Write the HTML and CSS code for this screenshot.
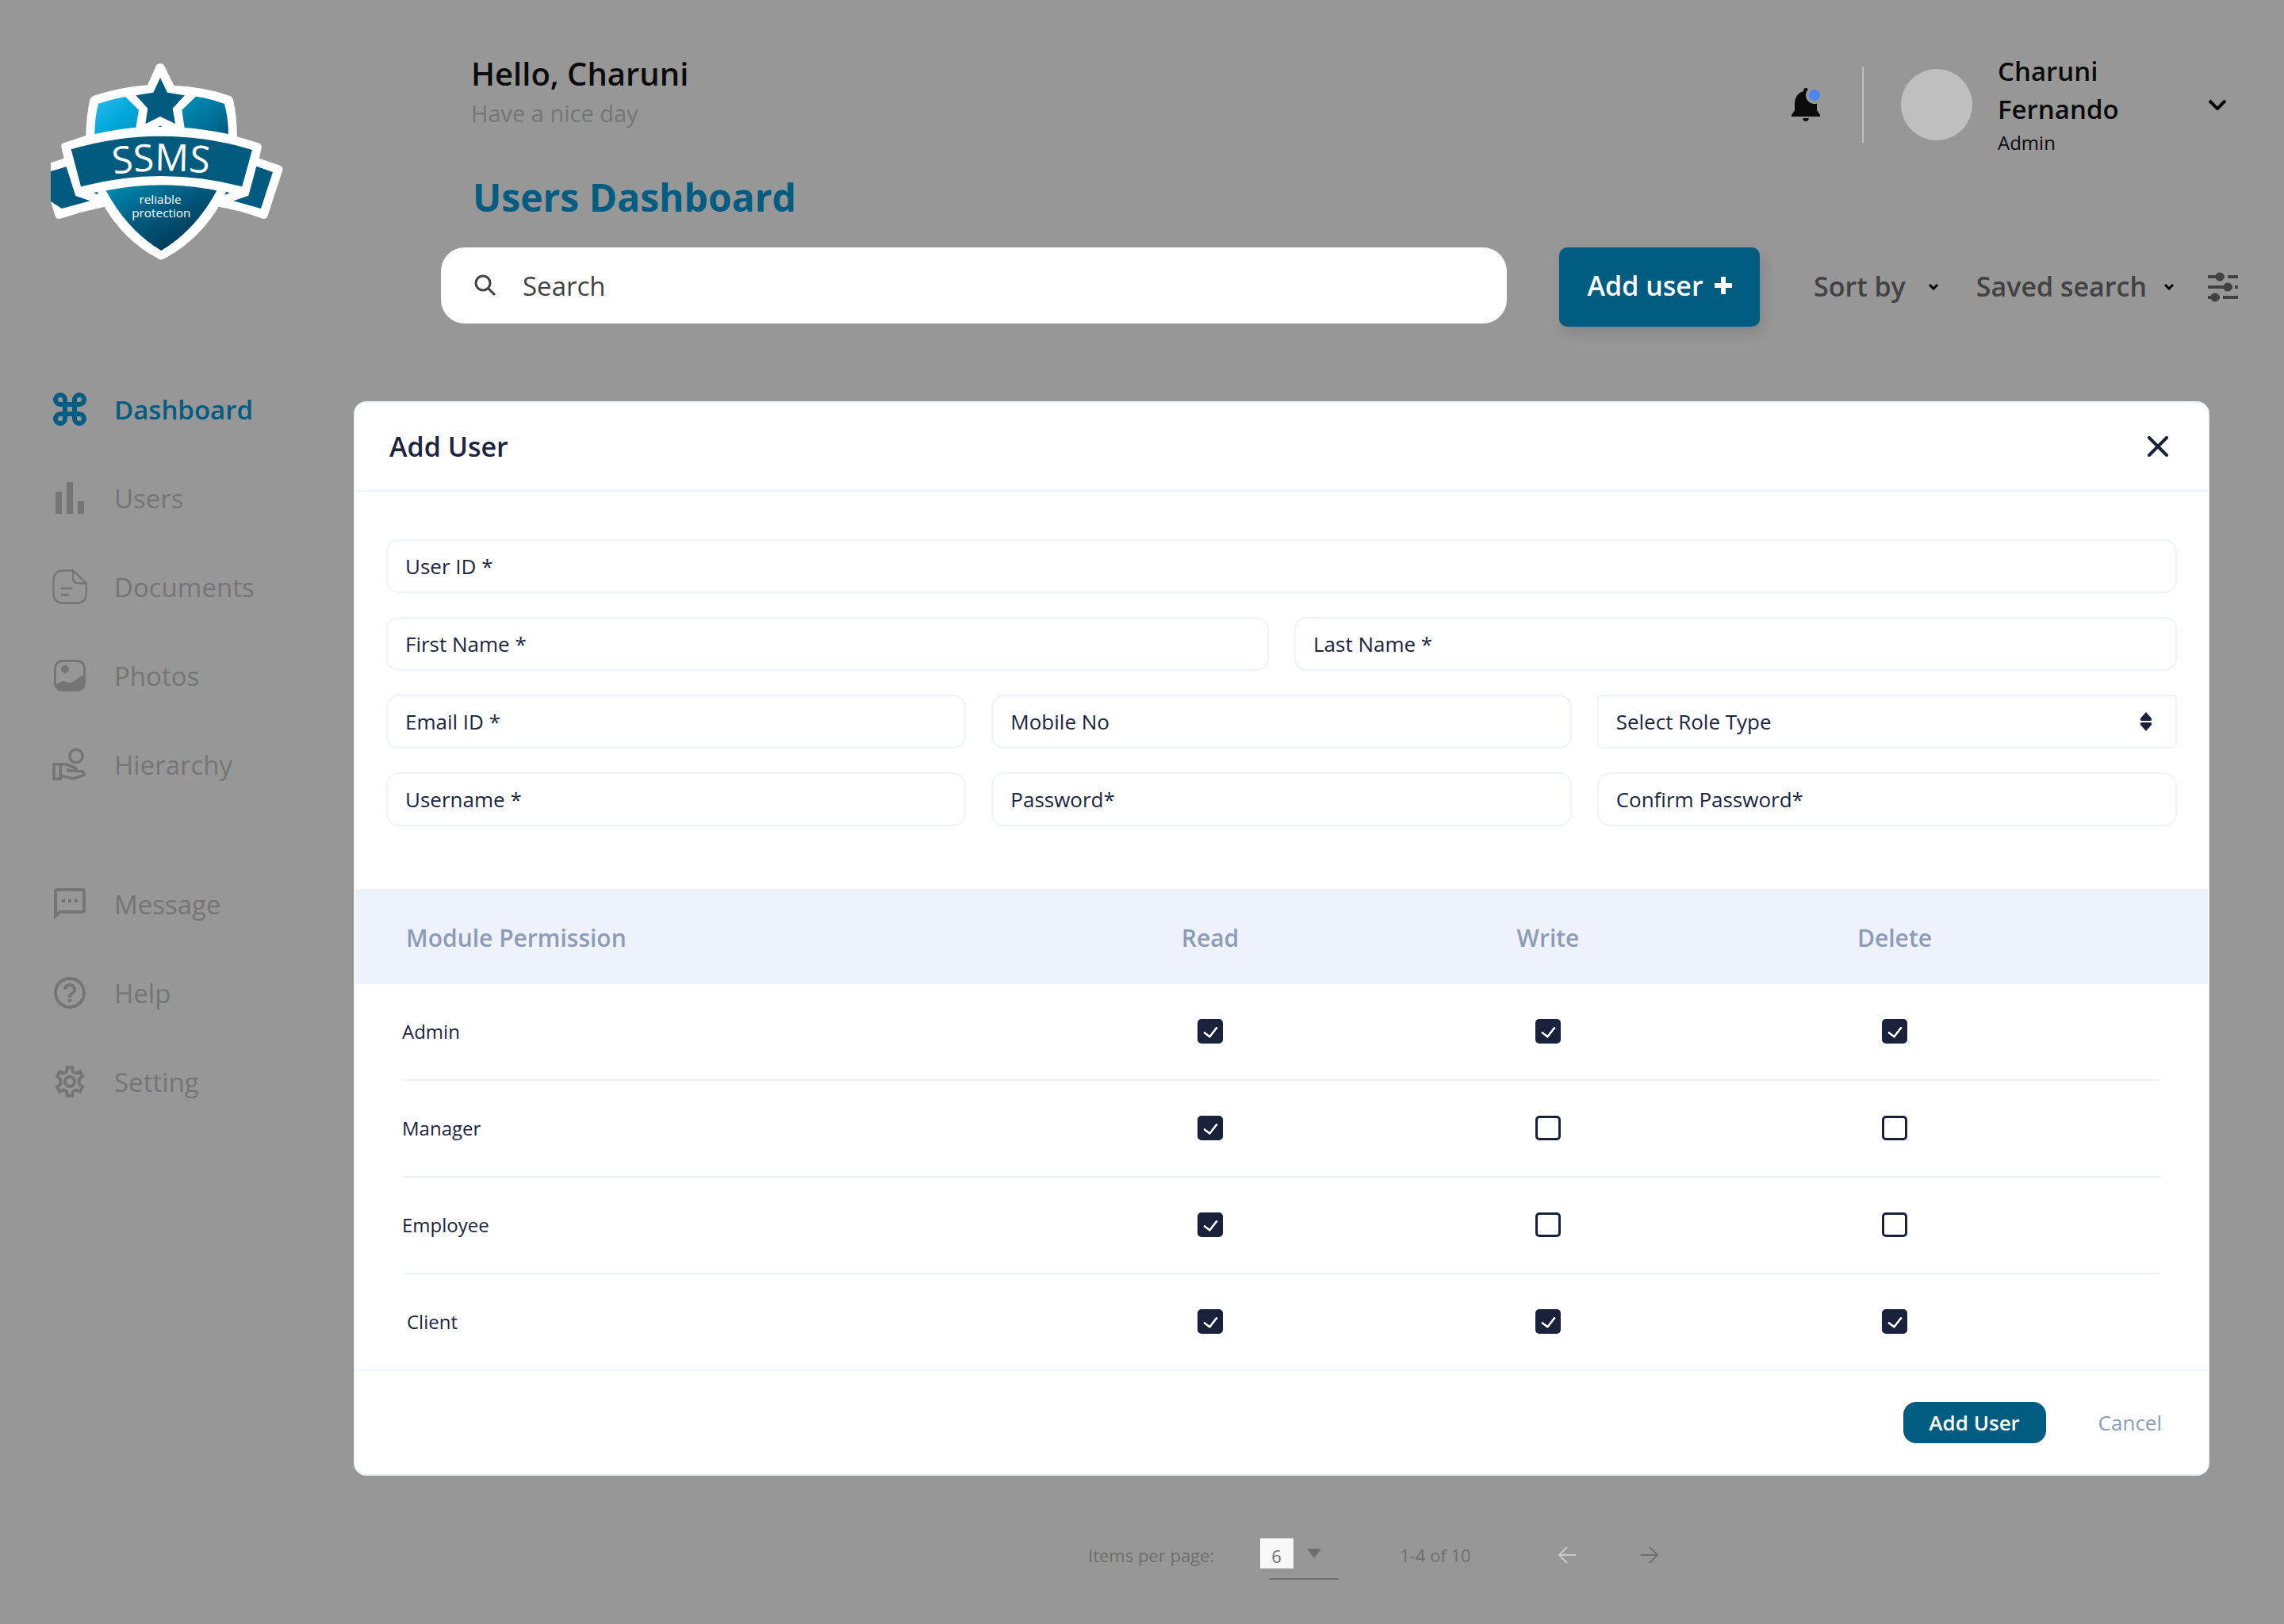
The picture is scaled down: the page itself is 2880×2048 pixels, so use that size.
FILE: index.html
```
<!DOCTYPE html>
<html lang="en">
<head>
<meta charset="utf-8">
<title>Users Dashboard</title>
<link rel="stylesheet" href="styles.css">
</head>
<body>
<div class="page">
  <aside class="sidebar">
    <svg class="logo" viewBox="0 0 1020 870" role="img" aria-label="SSMS reliable protection">
      <defs>
        <linearGradient id="left" x1="0" y1="0" x2="1" y2="1"><stop offset="0" stop-color="#2ebcf3"/><stop offset=".55" stop-color="#00a8d8"/><stop offset="1" stop-color="#0096c4"/></linearGradient>
        <linearGradient id="right" x1="0" y1="0" x2="1" y2="1"><stop offset="0" stop-color="#0092bd"/><stop offset="1" stop-color="#005b7f"/></linearGradient>
        <linearGradient id="base" x1="0.1" y1="0" x2="0.8" y2="0.8"><stop offset="0" stop-color="#0088b0"/><stop offset=".5" stop-color="#005b7f"/><stop offset="1" stop-color="#003a58"/></linearGradient>
        <path id="arc" d="M230 494Q490 440 750 490"/>
      </defs>
      <path fill="#fff" d="M472 66Q486 54 500 66L538 143Q650 148 750 183Q760 187 763 200Q776 260 777 337L858 361Q872 366 869 380L860 419L940 446Q952 452 949 464L892 638Q887 650 873 647Q790 616 707 602Q630 730 501 799Q490 806 479 799Q350 730 275 602Q190 620 108 647Q95 650 89 638L72 582V436L122 419L112 375Q110 365 121 361L205 333Q206 260 220 198Q223 187 233 183Q330 150 438 142Z"/>
      <path fill="url(#left)" d="M252 212Q300 196 354 186L405 236L394 302Q310 310 238 327Q238 268 252 212Z"/>
      <path fill="url(#right)" d="M621 185Q676 193 729 213Q744 270 744 327Q660 309 578 303L568 236Z"/>
      <path fill="#005b7f" d="M486 114L513 170L579 181L533 230L543 288L486 261L430 289L439 230L394 181L460 170ZM479 300Q486 293 493 300ZM149 385Q490 284 834 387L796 526Q490 446 186 526ZM72 468L131 451L166 561L221 580L114 609L72 582ZM850 449L912 471L867 609L763 580L820 560ZM234 550L249 546L251 556ZM735 546L750 549L730 558Z"/>
      <path fill="url(#base)" d="M281 541Q490 498 700 541Q620 690 490 768Q362 692 281 541Z"/>
      <g fill="#fff" text-anchor="middle">
        <text class="logo-name"><textPath href="#arc" startOffset="50%">SSMS</textPath></text>
        <text class="logo-tag" x="486" y="590">reliable</text>
        <text class="logo-tag" x="490" y="642">protection</text>
      </g>
    </svg>
    <nav class="menu">
      <a class="menu-item active" href="#"><svg viewBox="0 0 48 48" fill="none" stroke="currentColor" stroke-width="6"><path d="M18 18V12A6 6 0 1 0 12 18H36A6 6 0 1 0 30 12V36A6 6 0 1 0 36 30H12A6 6 0 1 0 18 36Z"/></svg>Dashboard</a>
      <a class="menu-item" href="#"><svg viewBox="0 0 24 24" fill="currentColor"><path d="M3 8h4v14H3zM10 2h4v20h-4zM17 14h4v8h-4z"/></svg>Users</a>
      <a class="menu-item" href="#"><svg viewBox="0 0 48 48" fill="none" stroke="currentColor" stroke-width="2.4"><path d="M28 3.500H16Q3.500 3.500 3.500 16V32Q3.500 44.500 16 44.500H32Q44.800 44.500 44.800 32V19.500L28 3.500V12Q28 19.500 35 19.500H44.500M14 26H26.500M14 34H22" stroke-linecap="round"/></svg>Documents</a>
      <a class="menu-item" href="#"><svg viewBox="0 0 48 48"><rect x="5.500" y="5.500" width="37" height="37" rx="9" fill="none" stroke="currentColor" stroke-width="3"/><circle cx="18" cy="16" r="5" fill="currentColor"/><path fill="currentColor" d="M6 36Q12 31 17 31Q22 33 25 33Q29 32 36 26Q40 22 43 26V35Q42 43 34 43H14Q7 43 6 36Z"/></svg>Photos</a>
      <a class="menu-item" href="#"><svg viewBox="0 0 48 48" fill="none" stroke="currentColor" stroke-width="3.600"><circle cx="32" cy="13.500" r="8.200"/><path d="M4 23.800H12.200V42.200H4ZM12.200 23.800H19L29 27.500Q32.500 29 32.500 32H24L20 30.500M32 32.500H38.500Q42 33 42 37.500L28 42L12.200 38"/></svg>Hierarchy</a>
    </nav>
    <nav class="menu">
      <a class="menu-item" href="#"><svg viewBox="0 0 24 24" fill="currentColor"><path d="M20 2H4c-1.100 0-2 .9-2 2v18l4-4h14c1.100 0 2-.9 2-2V4c0-1.100-.9-2-2-2zm0 14H5.200L4 17.200V4h16v12zM7 9h2v2H7zm4 0h2v2h-2zm4 0h2v2h-2z"/></svg>Message</a>
      <a class="menu-item" href="#"><svg viewBox="0 0 24 24" fill="currentColor"><path d="M11 18h2v-2h-2v2zm1-16C6.480 2 2 6.480 2 12s4.480 10 10 10 10-4.480 10-10S17.520 2 12 2zm0 18c-4.410 0-8-3.590-8-8s3.590-8 8-8 8 3.590 8 8-3.590 8-8 8zm0-14c-2.210 0-4 1.790-4 4h2c0-1.100.9-2 2-2s2 .9 2 2c0 2-3 1.750-3 5h2c0-2.250 3-2.500 3-5 0-2.210-1.790-4-4-4z"/></svg>Help</a>
      <a class="menu-item" href="#"><svg viewBox="0 0 24 24" fill="none" stroke="currentColor" stroke-width="2"><path d="M10.400 3h3.200l.4 2.700 1.900 1.100 2.500-1 1.600 2.800-2.100 1.700v3.400l2.100 1.700-1.600 2.800-2.500-1-1.900 1.100-.4 2.700h-3.200l-.4-2.700-1.900-1.100-2.500 1L4 15.400l2.100-1.700v-3.400L4 8.600l1.600-2.800 2.500 1L10 5.700z"/><circle cx="12" cy="12" r="3"/></svg>Setting</a>
    </nav>
  </aside>

  <main class="main">
    <header class="topbar">
      <div class="greeting">
        <p class="hello">Hello, Charuni</p>
        <p class="wish">Have a nice day</p>
      </div>
      <div class="account">
        <button class="icon-button" type="button" aria-label="Notifications"><svg class="bell" viewBox="0 0 36 42"><path d="M15 4Q15 0 18 0Q21 0 21 3Q31 7 32 18V28L36 34V36H0V34L4 28V18Q5 7 15 4ZM14 38H22Q21 42 18 42Q15 42 14 38Z"/><circle class="bell-gap" cx="29" cy="9" r="11"/><circle class="bell-dot" cx="29" cy="9" r="7"/></svg></button>
        <span class="divider"></span>
        <span class="avatar"></span>
        <p class="person"><span class="person-name">Charuni Fernando</span><span class="person-role">Admin</span></p>
        <button class="icon-button" type="button" aria-label="Account menu"><svg class="chevron" viewBox="0 0 24 14"><path d="M2 2L12 12L22 2"/></svg></button>
      </div>
    </header>
    <h1 class="title">Users Dashboard</h1>
    <div class="toolbar">
      <label class="search">
        <svg class="search-icon" viewBox="0 0 26 26"><circle cx="10" cy="10" r="9"/><path d="M17 17L25 25"/></svg>
        <input type="search" placeholder="Search" aria-label="Search">
      </label>
      <button class="add-button" type="button">Add user<svg class="plus" viewBox="0 0 22 22"><path d="M11 0V22M0 11H22"/></svg></button>
      <div class="filters">
        <button class="filter sort" type="button">Sort by<svg class="chevron-small" viewBox="0 0 14 9"><path d="M2 2L7 7L12 2"/></svg></button>
        <button class="filter saved" type="button">Saved search<svg class="chevron-small" viewBox="0 0 14 9"><path d="M2 2L7 7L12 2"/></svg></button>
        <button class="icon-button" type="button" aria-label="Filter settings"><svg class="sliders" viewBox="0 0 38 38"><path d="M0 6H11M25 6H38M0 19H20M34 19H38M0 32H5M19 32H38"/><circle cx="15" cy="6" r="5.600"/><circle cx="25" cy="19" r="5.600"/><circle cx="9" cy="32" r="5.600"/><path d="M9 6H21M19 19H31M3 32H15"/></svg></button>
      </div>
    </div>
    <footer class="pagination">
      <label for="per-page">Items per page:</label>
      <span class="per-page"><select id="per-page"><option>6</option></select><svg viewBox="0 0 18 12"><path d="M0 0H18L9 12Z"/></svg></span>
      <span class="range">1-4 of 10</span>
      <button class="icon-button prev" type="button" aria-label="Previous page"><svg class="arrow" viewBox="0 0 22 22"><path d="M22 11H1M11 1L1 11L11 21"/></svg></button>
      <button class="icon-button next" type="button" aria-label="Next page"><svg class="arrow" viewBox="0 0 22 22"><path d="M0 11H21M11 1L21 11L11 21"/></svg></button>
    </footer>
  </main>
</div>

<div class="overlay">
  <form class="modal" role="dialog" aria-labelledby="modal-title">
    <header class="modal-header">
      <h2 id="modal-title">Add User</h2>
      <button class="icon-button" type="button" aria-label="Close"><svg class="close" viewBox="0 0 26 26"><path d="M2 2L24 24M24 2L2 24"/></svg></button>
    </header>
    <div class="fields">
      <input class="field full" type="text" placeholder="User ID *" aria-label="User ID">
      <input class="field half" type="text" placeholder="First Name *" aria-label="First Name">
      <input class="field half" type="text" placeholder="Last Name *" aria-label="Last Name">
      <input class="field" type="email" placeholder="Email ID *" aria-label="Email ID">
      <input class="field" type="tel" placeholder="Mobile No" aria-label="Mobile No">
      <div class="select-wrap"><select class="field role" aria-label="Role Type"><option>Select Role Type</option></select><svg class="sort-icon" viewBox="0 0 16 24"><path d="M8 0L15 8Q16 11 13 11H3Q0 11 1 8ZM8 24L15 16Q16 13 13 13H3Q0 13 1 16Z"/></svg></div>
      <input class="field" type="text" placeholder="Username *" aria-label="Username">
      <input class="field" type="password" placeholder="Password*" aria-label="Password">
      <input class="field" type="password" placeholder="Confirm Password*" aria-label="Confirm Password">
    </div>
    <table class="permissions">
      <thead>
        <tr><th class="module" scope="col">Module Permission</th><th class="level" scope="col">Read</th><th class="level" scope="col">Write</th><th class="level last" scope="col">Delete</th></tr>
      </thead>
      <tbody>
        <tr><th scope="row">Admin</th><td><input type="checkbox" aria-label="Admin read" checked></td><td><input type="checkbox" aria-label="Admin write" checked></td><td class="last"><input type="checkbox" aria-label="Admin delete" checked></td></tr>
        <tr><th scope="row">Manager</th><td><input type="checkbox" aria-label="Manager read" checked></td><td><input type="checkbox" aria-label="Manager write"></td><td class="last"><input type="checkbox" aria-label="Manager delete"></td></tr>
        <tr><th scope="row">Employee</th><td><input type="checkbox" aria-label="Employee read" checked></td><td><input type="checkbox" aria-label="Employee write"></td><td class="last"><input type="checkbox" aria-label="Employee delete"></td></tr>
        <tr><th class="indent" scope="row">Client</th><td><input type="checkbox" aria-label="Client read" checked></td><td><input type="checkbox" aria-label="Client write" checked></td><td class="last"><input type="checkbox" aria-label="Client delete" checked></td></tr>
      </tbody>
    </table>
    <footer class="modal-footer">
      <button class="submit" type="submit">Add User</button>
      <button class="cancel" type="button">Cancel</button>
    </footer>
  </form>
</div>
</body>
</html>
```
FILE: styles.css
```
* { box-sizing: border-box; }

body {
  margin: 0;
  background: #979797;
  color: #0b0b0b;
  font-family: "Open Sans", "Noto Sans", sans-serif;
  font-size: 33px;
}

p, h1, h2 { margin: 0; }
button, input, select { font: inherit; color: inherit; }
button { padding: 0; border: 0; background: none; cursor: pointer; }
svg { display: block; flex: none; }

.page { display: flex; min-height: 100vh; }

/* Sidebar */
.sidebar { flex: none; width: 556px; padding: 60px 0 0 64px; }
.logo { width: 340px; height: 290px; margin-left: -24px; }
.logo-name { font-family: "Open Sans", sans-serif; font-size: 142px; }
.logo-tag { font-family: "Open Sans", sans-serif; font-size: 46px; }
.menu { display: flex; flex-direction: column; gap: 64px; padding-top: 142px; }
.menu + .menu { padding-top: 128px; }
.menu-item { display: flex; align-items: center; gap: 32px; height: 48px; color: #757575; text-decoration: none; }
.menu-item svg { width: 48px; height: 48px; }
.menu-item.active { color: #005c80; font-weight: 600; }

/* Top area */
.main { display: flex; flex: 1; flex-direction: column; padding: 66px 58px 66px 0; }
.topbar { display: flex; justify-content: space-between; padding-left: 38px; }
.hello { font-size: 40px; font-weight: 600; line-height: 54px; }
.wish { font-size: 29px; line-height: 46px; color: #757575; }
.account { display: flex; align-items: center; padding-right: 14px; }
.bell { width: 36px; height: 42px; fill: #0b0b0b; overflow: visible; }
.bell-gap { fill: #979797; }
.bell-dot { fill: #4a86f7; }
.divider { width: 2px; height: 96px; margin: 0 47px 0 53px; background: #c0c0c0; }
.avatar { width: 90px; height: 90px; border-radius: 50%; background: #bfbfbf; }
.person { width: 190px; margin: 0 75px 0 32px; }
.person-name { display: block; font-weight: 600; line-height: 48px; }
.person-role { display: block; font-size: 24px; line-height: 36px; }
.chevron { width: 24px; height: 14px; fill: none; stroke: #000; stroke-width: 4; }
.title { margin: 18px 0 30px 40px; color: #005c80; font-size: 48px; font-weight: 700; line-height: 66px; }

/* Toolbar */
.toolbar { display: flex; align-items: flex-start; color: #424242; }
.search { display: flex; flex: 1; align-items: center; gap: 34px; height: 96px; padding: 0 43px; border-radius: 30px; background: #fff; }
.search input { flex: 1; min-width: 0; padding: 0; border: 0; outline: 0; background: none; }
.search input::placeholder { color: #424242; opacity: 1; }
.search-icon { width: 26px; height: 26px; fill: none; stroke: #424242; stroke-width: 3; overflow: visible; }
.add-button { display: flex; align-items: center; justify-content: center; gap: 14px; width: 253px; height: 100px; margin: 0 68px 0 66px; padding-bottom: 4px; border-radius: 10px; background: #005c80; box-shadow: 4px 8px 16px rgba(0, 0, 0, 0.12); color: #fff; font-size: 34px; font-weight: 600; }
.plus { width: 22px; height: 22px; stroke: #fff; stroke-width: 6; }
.filters { display: flex; align-items: center; height: 100px; font-size: 34px; font-weight: 600; }
.filter { display: flex; align-items: center; padding-bottom: 2px; }
.sort { gap: 28px; margin-right: 47px; }
.saved { gap: 21px; margin-right: 42px; }
.chevron-small { width: 14px; height: 9px; fill: none; stroke: #000; stroke-width: 3; }
.sliders { width: 38px; height: 38px; fill: #424242; stroke: #424242; stroke-width: 4; }
.sliders circle { stroke: none; }

/* Pagination */
.pagination { display: flex; align-items: center; margin-top: auto; padding-left: 816px; color: #6f6f6f; font-size: 22px; }
.per-page { display: flex; position: relative; align-items: center; gap: 17px; width: 100px; margin: 0 76px 4px 58px; }
.per-page::after { content: ""; position: absolute; right: 1px; bottom: -14px; width: 88px; height: 2px; background: #6f6f6f; }
.per-page select { width: 42px; height: 38px; padding: 6px 14px 0; border: 0; border-radius: 0; appearance: none; background: #f8f8f8; }
.per-page svg { width: 18px; height: 12px; fill: #6f6f6f; }
.range { width: 90px; margin-right: 110px; }
.arrow { width: 22px; height: 22px; fill: none; stroke: currentColor; stroke-width: 2; }
.prev { margin-right: 82px; color: #c9c9c9; }

/* Dialog */
.overlay { position: absolute; inset: 0 0 auto; padding: 506px 94px 188px 446px; }
.modal { overflow: hidden; border: 2px solid #eff4fa; border-radius: 16px; background: #fff; color: #1c2440; font-size: 26px; }
.modal-header { display: flex; align-items: center; justify-content: space-between; height: 112px; padding: 0 50px 0 43px; border-bottom: 2px solid #eff4fa; }
.modal-header h2 { font-size: 34px; font-weight: 600; }
.close { width: 26px; height: 26px; fill: none; stroke: #1a213a; stroke-width: 4; stroke-linecap: round; }
.fields { display: grid; grid-template-columns: repeat(6, 1fr); gap: 30px 32px; padding: 60px 39px 79px; }
.field, .select-wrap { grid-column: span 2; min-width: 0; }
.field { width: 100%; height: 68px; padding: 0 22px 1px; border: 2px solid #eff4fa; border-radius: 16px; outline: 0; background: #fff; }
.field::placeholder { color: #1c2440; opacity: 1; }
.full { grid-column: span 6; }
.half { grid-column: span 3; }
.select-wrap { display: grid; align-items: center; }
.select-wrap > * { grid-area: 1 / 1; }
.role { border-radius: 6px; appearance: none; }
.sort-icon { width: 16px; height: 24px; margin-right: 31px; justify-self: end; fill: #1a213a; pointer-events: none; }

/* Permission table */
.permissions { width: 100%; border-collapse: collapse; table-layout: fixed; }
.permissions thead tr { height: 120px; background: #edf2fb; color: #8d9bb8; font-size: 30px; }
.permissions th, .permissions td { padding: 0; font-weight: 400; text-align: center; }
.permissions thead th { padding-top: 2px; font-weight: 600; }
.permissions .module { padding-left: 64px; text-align: left; }
.level { width: 426px; }
.permissions .level.last { width: 619px; }
.permissions .last { padding-right: 171px; }
.permissions tbody tr { height: 122px; background: linear-gradient(#eff4fa, #eff4fa) 59px 100% / calc(100% - 118px) 2px no-repeat; }
.permissions tbody tr:last-child { background: linear-gradient(#eff4fa, #eff4fa) 0 100% / 100% 2px no-repeat; }
.permissions tbody th, .permissions tbody td { padding-bottom: 4px; }
.permissions tbody th { padding-left: 59px; font-size: 24px; text-align: left; }
.permissions tbody .indent { padding-left: 65px; }
.permissions input { display: block; position: relative; width: 32px; height: 31px; margin: 0 auto; border: 3px solid #1a213a; border-radius: 5px; appearance: none; background: #fff; }
.permissions input:checked { background: #1a213a; }
.permissions input:checked::after { content: ""; position: absolute; top: 3px; left: 8px; width: 8px; height: 14px; border: solid #fff; border-width: 0 3px 3px 0; border-radius: 1px; transform: rotate(38deg); }

.modal-footer { display: flex; align-items: center; justify-content: flex-end; gap: 66px; height: 130px; padding: 0 58px 0 0; }
.submit { width: 180px; height: 52px; border-radius: 16px; background: #005c80; color: #fff; font-weight: 600; }
.cancel { color: #8d9bb8; }
```
